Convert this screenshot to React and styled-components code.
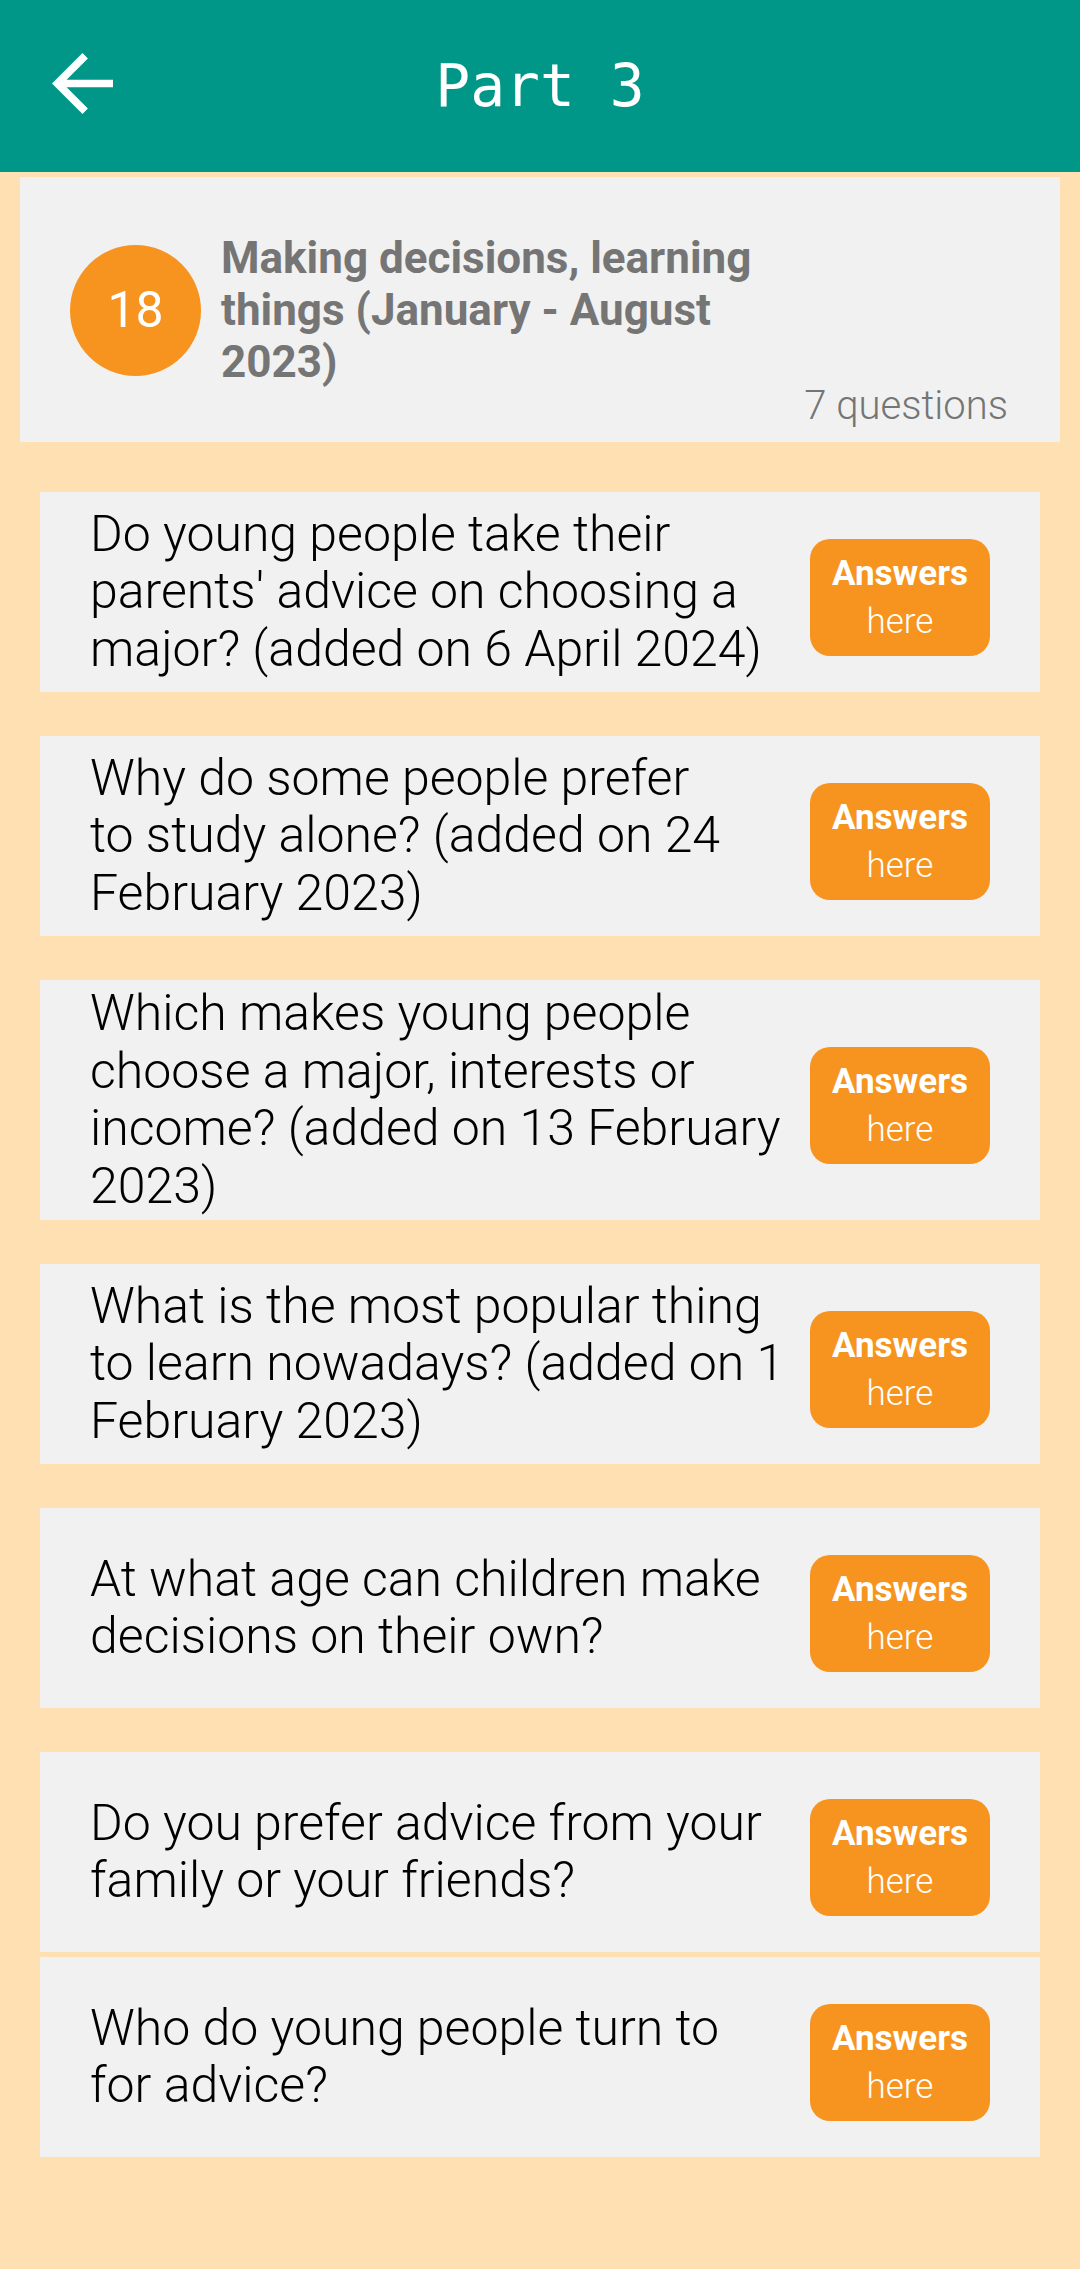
import React from 'react';
import styled, { createGlobalStyle } from 'styled-components';

const GlobalStyle = createGlobalStyle`
  html, body {
    margin: 0;
    padding: 0;
    background-color: #ffe0b2;
  }
  body {
    font-family: Roboto, "Noto Sans", "Liberation Sans", sans-serif;
  }
`;

const Page = styled.div`
  width: 1080px;
  min-height: 2269px;
  background-color: #ffe0b2;
  display: flex;
  flex-direction: column;
`;

const AppBar = styled.div`
  height: 172px;
  background-color: #009688;
  display: flex;
  align-items: center;
  justify-content: center;
  position: relative;
`;

const BackButton = styled.button`
  position: absolute;
  left: 52px;
  top: 53px;
  width: 61px;
  height: 61px;
  padding: 0;
  border: none;
  background: none;
  cursor: pointer;
  svg {
    display: block;
  }
`;

const Title = styled.h1`
  margin: 0;
  color: #ffffff;
  font-family: "DejaVu Sans Mono", "Liberation Mono", monospace;
  font-weight: 400;
  font-size: 58px;
  line-height: 1;
`;

const Content = styled.div`
  display: flex;
  flex-direction: column;
  padding: 5px 20px 0;
`;

const TopicCard = styled.div`
  background-color: #f1f1f1;
  display: flex;
  flex-direction: column;
  padding: 55px 52px 16px 50px;
`;

const TopicRow = styled.div`
  display: flex;
  align-items: center;
  gap: 20px;
`;

const Badge = styled.div`
  width: 131px;
  height: 131px;
  flex-shrink: 0;
  border-radius: 50%;
  background-color: #f7941f;
  color: #ffffff;
  display: flex;
  align-items: center;
  justify-content: center;
  font-size: 50px;
  font-weight: 400;
`;

const TopicTitle = styled.div`
  width: 560px;
  color: #757575;
  font-size: 44px;
  font-weight: 700;
  line-height: normal;
`;

const Count = styled.div`
  align-self: flex-end;
  margin-top: -2px;
  color: #757575;
  font-size: 40px;
  font-weight: 300;
  line-height: 40px;
`;

const List = styled.div`
  display: flex;
  flex-direction: column;
  padding: 50px 40px 0;
`;

const QuestionCard = styled.div`
  background-color: #f1f1f1;
  min-height: 200px;
  box-sizing: border-box;
  padding: 5px 50px 5px 50px;
  display: flex;
  align-items: center;
  margin-bottom: ${(p) => (p.$tight ? '5px' : '44px')};
`;

const Question = styled.div`
  flex: 1;
  color: #000000;
  font-size: 50px;
  font-weight: 300;
  line-height: 57.5px;
  white-space: pre-line;
`;

const AnswerButton = styled.button`
  width: 180px;
  height: 117px;
  flex-shrink: 0;
  margin: 11px 0 0 8px;
  padding: 0;
  border: none;
  border-radius: 20px;
  background-color: #f7941f;
  color: #ffffff;
  font-family: Roboto, "Noto Sans", sans-serif;
  font-size: 35px;
  line-height: 48px;
  display: flex;
  flex-direction: column;
  align-items: center;
  justify-content: center;
  cursor: pointer;
  b {
    font-weight: 700;
  }
  span {
    font-weight: 300;
  }
`;

const questions = [
  'Do young people take their\nparents\' advice on choosing a\nmajor? (added on 6 April 2024)',
  'Why do some people prefer\nto study alone? (added on 24\nFebruary 2023)',
  'Which makes young people\nchoose a major, interests or\nincome? (added on 13 February\n2023)',
  'What is the most popular thing\nto learn nowadays? (added on 1\nFebruary 2023)',
  'At what age can children make\ndecisions on their own?',
  'Do you prefer advice from your\nfamily or your friends?',
  'Who do young people turn to\nfor advice?',
];

function ArrowBack() {
  return (
    <svg width="61" height="61" viewBox="4 4 16 16" fill="#ffffff">
      <path d="M20 11H7.83l5.59-5.59L12 4l-8 8 8 8 1.41-1.41L7.83 13H20v-2z" />
    </svg>
  );
}

export default function App() {
  return (
    <Page>
      <GlobalStyle />
      <AppBar>
        <BackButton aria-label="Back">
          <ArrowBack />
        </BackButton>
        <Title>Part 3</Title>
      </AppBar>

      <Content>
        <TopicCard>
          <TopicRow>
            <Badge>18</Badge>
            <TopicTitle>Making decisions, learning things (January - August 2023)</TopicTitle>
          </TopicRow>
          <Count>7 questions</Count>
        </TopicCard>
      </Content>

      <List>
        {questions.map((q, i) => (
          <QuestionCard key={i} $tight={i === 5}>
            <Question>{q}</Question>
            <AnswerButton>
              <b>Answers</b>
              <span>here</span>
            </AnswerButton>
          </QuestionCard>
        ))}
      </List>
    </Page>
  );
}
